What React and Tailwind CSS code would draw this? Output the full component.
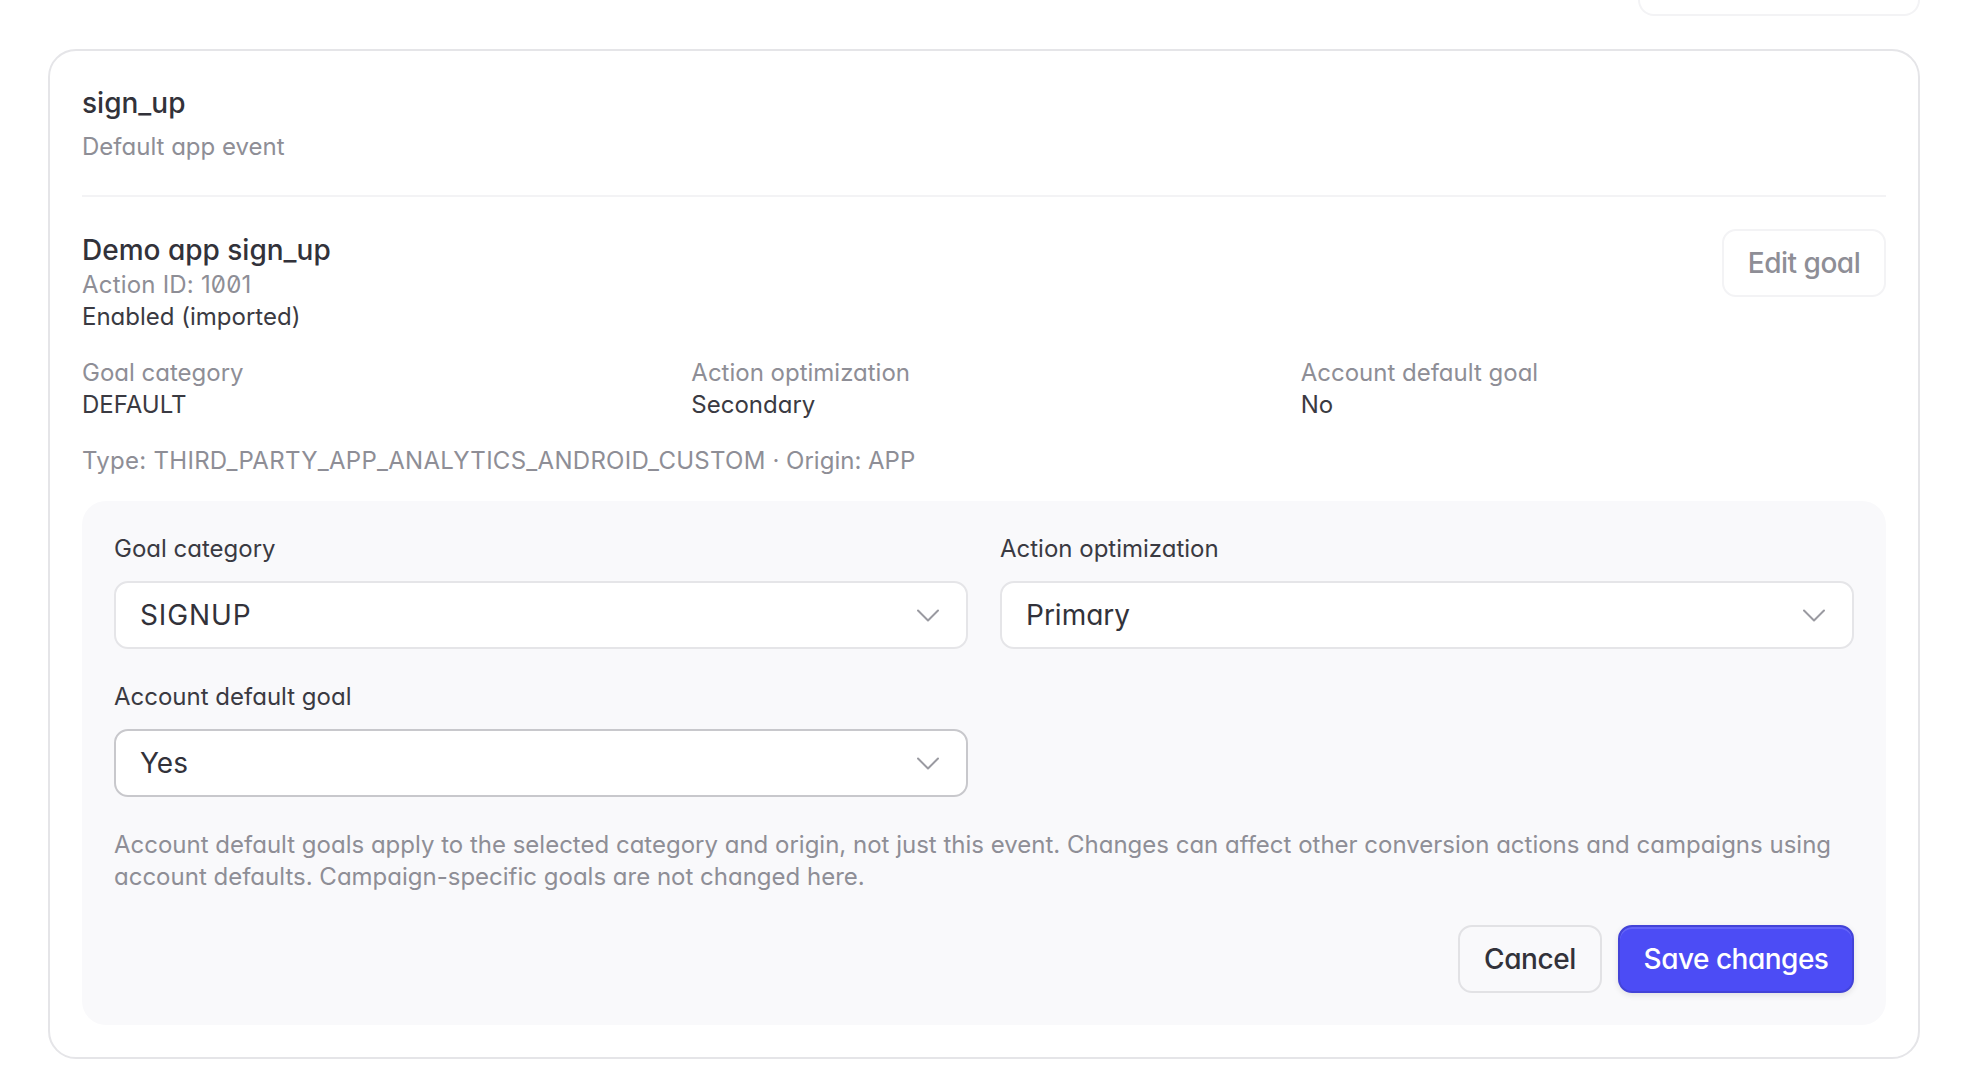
const font = "[font-family:Inter,'Liberation_Sans',sans-serif] [font-feature-settings:'cv11','zero']";

function Chevron() {
  return (
    <svg width="22" height="13" viewBox="0 0 22 13" fill="none" className="shrink-0">
      <path d="M1 1.5 L11 11.5 L21 1.5" stroke="#9a9aa1" strokeWidth="2" strokeLinecap="round" strokeLinejoin="round" />
    </svg>
  );
}

function Select({ label, value, strong, caps }) {
  return (
    <div className="flex flex-col">
      <div className="text-[24px] leading-[32px] text-[#3a3a42]">{label}</div>
      <div className={`mt-[16px] flex h-[68px] items-center justify-between rounded-[14px] border-2 bg-white pl-[24px] pr-[27px] text-[28px] text-[#32323a] ${strong ? "border-[#c8c8cc]" : "border-[#e5e5e8]"}`}>
        <span className={caps ? "tracking-[0.9px]" : "tracking-normal"}>{value}</span>
        <Chevron />
      </div>
    </div>
  );
}

function Stat({ label, value }) {
  return (
    <div>
      <div className="text-[24px] leading-[32px] text-[#8e8e96]">{label}</div>
      <div className="text-[24px] leading-[32px] text-[#3a3a42]">{value}</div>
    </div>
  );
}

export default function App() {
  return (
    <div className={`${font} min-h-[1088px] bg-white px-[48px] pb-[29px]`}>
      <div className="ml-auto h-[16px] w-[282px] rounded-b-[16px] border-x-2 border-b-2 border-[#f3f3f5]" />
      <div className="mt-[33px] h-[1010px] rounded-[28px] border-2 border-[#e5e5e8] bg-white px-[32px] pt-[33px]">
        <div className="text-[28px] font-medium leading-[38px] text-[#32323a]">sign_up</div>
        <div className="mt-[9px] text-[24px] leading-[32px] text-[#8e8e96]">Default app event</div>
        <div className="mt-[32px] h-[2px] bg-[#f3f3f5]" />

        <div className="mt-[34px] flex items-start justify-between">
          <div>
            <div className="text-[28px] font-medium leading-[38px] text-[#32323a]">Demo app sign_up</div>
            <div className="text-[24px] leading-[32px] tracking-[0.2px] text-[#8e8e96]">Action ID: 1001</div>
            <div className="text-[24px] leading-[32px] text-[#3a3a42]">Enabled (imported)</div>
          </div>
          <button className="-mt-[2px] flex h-[68px] w-[164px] items-center justify-center rounded-[14px] border-2 border-[#f3f3f5] bg-white text-[28px] font-medium tracking-[-0.5px] text-[#8e8e96]">
            Edit goal
          </button>
        </div>

        <div className="mt-[24px] grid grid-cols-3 gap-x-[24px]">
          <Stat label="Goal category" value="DEFAULT" />
          <Stat label="Action optimization" value="Secondary" />
          <Stat label="Account default goal" value="No" />
        </div>

        <div className="mt-[24px] text-[24px] leading-[32px] text-[#8e8e96]">
          <span className="tracking-[0.28px]">Type: THIRD_PARTY_APP_ANALYTICS_ANDROID_CUSTOM</span> · Origin: APP
        </div>

        <div className="mt-[24px] h-[524px] rounded-[24px] bg-[#f9f9fb] px-[32px] pt-[32px]">
          <div className="grid grid-cols-2 gap-x-[32px] gap-y-[32px]">
            <Select label="Goal category" value="SIGNUP" caps />
            <Select label="Action optimization" value="Primary" />
            <Select label="Account default goal" value="Yes" strong />
          </div>
          <p className="mt-[32px] text-[24px] leading-[32px] text-[#8e8e96]">
            Account default goals apply to the selected category and origin, not just this event. Changes can affect other conversion actions and campaigns using account defaults. Campaign-specific goals are not changed here.
          </p>
          <div className="mt-[32px] flex justify-end gap-[16px]">
            <button className="flex h-[68px] w-[144px] items-center justify-center rounded-[14px] border-2 border-[#e2e2e5] text-[28px] font-medium tracking-[-0.4px] text-[#32323a]">
              Cancel
            </button>
            <button className="flex h-[68px] w-[236px] items-center justify-center rounded-[14px] border-2 border-[#4343d8] bg-[#4c4cf5] text-[28px] font-medium tracking-[-0.5px] text-white shadow-[inset_0_2px_0_#6464f8,0_2px_6px_rgba(0,0,0,0.1)]">
              Save changes
            </button>
          </div>
        </div>
      </div>
    </div>
  );
}
